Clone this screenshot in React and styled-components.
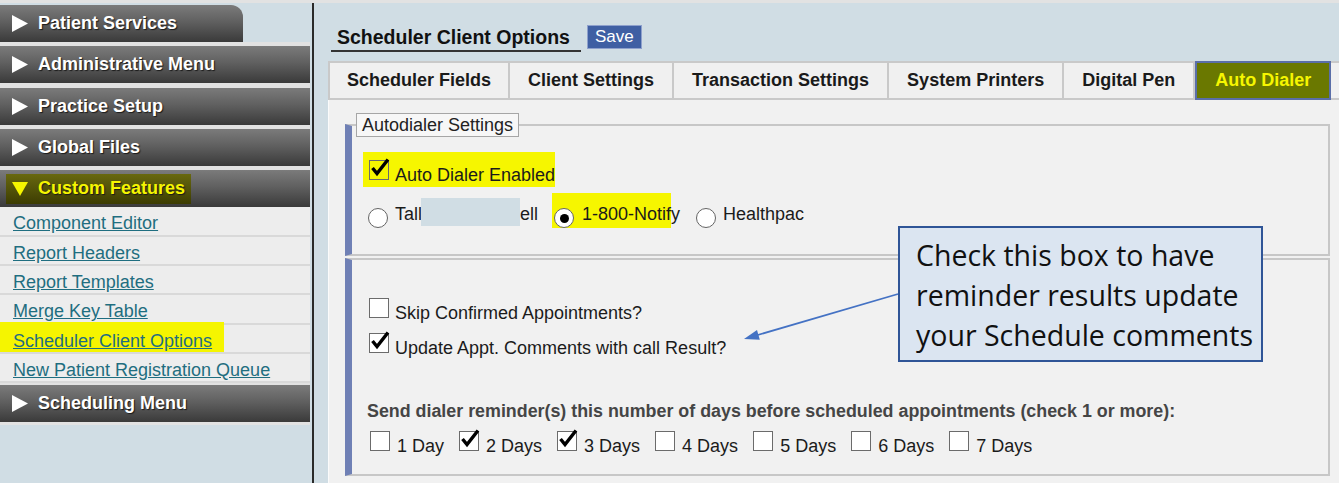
import React from "react";
import styled, { createGlobalStyle, css } from "styled-components";

const GlobalStyle = createGlobalStyle`
  html, body { margin: 0; padding: 0; }
  body {
    background: #d0dde4;
    font-family: "Liberation Sans", Arial, sans-serif;
    overflow: hidden;
  }
`;

// data
const menus = ["Administrative Menu", "Practice Setup", "Global Files"];
const links = [
  "Component Editor",
  "Report Headers",
  "Report Templates",
  "Merge Key Table",
  "Scheduler Client Options",
  "New Patient Registration Queue",
];
const tabs = [
  "Scheduler Fields",
  "Client Settings",
  "Transaction Settings",
  "System Printers",
  "Digital Pen",
  "Auto Dialer",
];
const days = [
  ["1 Day", false],
  ["2 Days", true],
  ["3 Days", true],
  ["4 Days", false],
  ["5 Days", false],
  ["6 Days", false],
  ["7 Days", false],
];

const RightTri = () => (
  <svg width="16" height="17" viewBox="0 0 16 17">
    <polygon points="0,0 16,8.5 0,17" fill="#fff" />
  </svg>
);
const DownTri = () => (
  <svg width="16" height="14" viewBox="0 0 16 14">
    <polygon points="0,0 16,0 8,14" fill="#f6f600" />
  </svg>
);

const Check = ({ on, bg }) => (
  <Box $bg={bg}>
    {on && (
      <CheckMark width="22" height="22" viewBox="0 0 22 22">
        <path d="M3.5 11 L8 16.5 L19 2.5" fill="none" stroke="#000" strokeWidth="3.4" />
      </CheckMark>
    )}
  </Box>
);

const App = () => {
  return (
    <>
      <GlobalStyle />
      <Frame>
        <TopStrip />
        <Body>
          <Sidebar>
            <PatientTab>
              <RightTri />
              Patient Services
            </PatientTab>
            <MenuGroup>
              {menus.map((m) => (
                <Bar key={m}>
                  <RightTri />
                  {m}
                </Bar>
              ))}
              <Bar>
                <Hot>
                  <DownTri />
                  Custom Features
                </Hot>
              </Bar>
              <LinkList>
                {links.map((l) => (
                  <LinkRow key={l}>
                    {l === "Scheduler Client Options" ? (
                      <Mark>
                        <Link href="#">{l}</Link>
                      </Mark>
                    ) : (
                      <Link href="#">{l}</Link>
                    )}
                  </LinkRow>
                ))}
              </LinkList>
              <Bar $gap={2}>
                <RightTri />
                Scheduling Menu
              </Bar>
            </MenuGroup>
          </Sidebar>

          <Main>
            <TitleRow>
              <Title>Scheduler Client Options</Title>
              <SaveButton>Save</SaveButton>
            </TitleRow>
            <TabRow>
              {tabs.map((t) => (
                <Tab key={t} $active={t === "Auto Dialer"}>
                  {t}
                </Tab>
              ))}
              <Tab $stub />
            </TabRow>

            <Panel>
              <Fieldset $pad="15px 0 26px">
                <Legend>Autodialer Settings</Legend>
                <Marked>
                  <Check on bg="#f6f600" />
                  <Label>Auto Dialer Enabled</Label>
                </Marked>
                <RadioRow>
                  <Radio />
                  <Label $mb={4} $ml={7}>Tall</Label>
                  <Redacted />
                  <Label $mb={4}>ell</Label>
                  <RadioMark>
                    <Radio $on />
                    <Label $mb={4} $ml={8}>1-800-Notify</Label>
                  </RadioMark>
                  <Radio $ml={25} />
                  <Label $mb={4} $ml={7}>Healthpac</Label>
                </RadioRow>
              </Fieldset>

              <Fieldset $pad="38px 0 18px" $mt={2}>
                <CheckRow>
                  <Check />
                  <Label>Skip Confirmed Appointments?</Label>
                </CheckRow>
                <CheckRow $mt={10}>
                  <Check on />
                  <Label>Update Appt. Comments with call Result?</Label>
                </CheckRow>
                <SendLabel>
                  Send dialer reminder(s) this number of days before scheduled appointments (check 1 or more):
                </SendLabel>
                <DayRow>
                  {days.map(([d, on]) => (
                    <DayItem key={d}>
                      <Check on={on} />
                      <Label>{d}</Label>
                    </DayItem>
                  ))}
                </DayRow>
              </Fieldset>
            </Panel>
          </Main>
        </Body>

        <Pointer width="1339" height="483" viewBox="0 0 1339 483">
          <line x1="898" y1="294" x2="756" y2="335.5" stroke="#4472c4" strokeWidth="1.8" />
          <polygon points="744,339 759.8,339.8 757,330" fill="#4472c4" />
        </Pointer>
        <Callout>
          Check this box to have
          <br />
          reminder results update
          <br />
          your Schedule comments
        </Callout>
      </Frame>
    </>
  );
};

const Frame = styled.div`
  position: relative;
  width: 1339px;
  height: 483px;
  overflow: hidden;
  background: #d0dde4;
`;
const TopStrip = styled.div`
  height: 3px;
  background: #e2e2e2;
`;
const Body = styled.div`
  display: flex;
  height: 480px;
`;

// sidebar
const Sidebar = styled.nav`
  width: 314px;
  flex-shrink: 0;
  box-sizing: border-box;
  border-right: 2px solid #2a2a2a;
  padding-top: 2px;
`;
const barStyle = css`
  display: flex;
  align-items: center;
  gap: 10px;
  box-sizing: border-box;
  height: 37px;
  padding-left: 12px;
  background: linear-gradient(to bottom, #7b7b7b 0%, #606060 45%, #3a3a3a 100%);
  color: #fff;
  font-weight: bold;
  font-size: 18px;
  text-shadow: 1px 1px 1px #1a1a1a;
  white-space: nowrap;
`;
const PatientTab = styled.div`
  ${barStyle};
  width: 243px;
  border-top-right-radius: 12px;
`;
const MenuGroup = styled.div`
  width: 310px;
  background: #e2e2e2;
  padding-bottom: 3px;
  display: flex;
  flex-direction: column;
`;
const Bar = styled.div`
  ${barStyle};
  margin-top: ${(p) => (p.$gap ?? 4.3)}px;
`;
const Hot = styled.span`
  display: inline-flex;
  align-items: center;
  gap: 10px;
  height: 30px;
  margin-left: -6px;
  padding: 0 6px;
  background: linear-gradient(to bottom, #68680e 0%, #4e4e08 60%, #3c3c02 100%);
  color: #f6f600;
`;
const LinkList = styled.div`
  background: #ededed;
`;
const LinkRow = styled.div`
  box-sizing: border-box;
  height: 29.33px;
  padding: 6px 0 0 13px;
  border-bottom: 2px solid #d9d9d9;
  font-size: 18px;
  line-height: 20px;
  white-space: nowrap;
`;
const Link = styled.a`
  color: #1f6e80;
  text-decoration: underline;
`;
const Mark = styled.span`
  background: #f5f500;
  padding: 9px 12px 1px 13px;
  margin-left: -13px;
`;

// main
const Main = styled.main`
  flex: 1;
  min-width: 0;
  padding-left: 14px;
  display: flex;
  flex-direction: column;
`;
const TitleRow = styled.div`
  display: flex;
  align-items: flex-start;
  gap: 6px;
  margin: 22px 0 0 3px;
`;
const Title = styled.h1`
  margin: 0;
  width: 250px;
  box-sizing: border-box;
  padding: 1px 6px 2px;
  border-bottom: 2px solid #333;
  font-size: 19.5px;
  line-height: 22px;
  font-weight: bold;
  color: #111;
  white-space: nowrap;
`;
const SaveButton = styled.button`
  height: 24px;
  padding: 0 7px;
  border: 1px solid #8ea0cc;
  background: #3f5fa3;
  color: #fff;
  font-family: "Liberation Sans", Arial, sans-serif;
  font-size: 17px;
  cursor: pointer;
`;
const TabRow = styled.div`
  display: flex;
  margin-top: 9px;
`;
const Tab = styled.div`
  flex-shrink: 0;
  display: flex;
  align-items: center;
  box-sizing: border-box;
  height: 39px;
  padding: 0 18px;
  background: #f0f0f0;
  border: 2px solid #c9c9c9;
  border-left-width: 0;
  font-weight: bold;
  font-size: 18px;
  color: #1a1a1a;
  white-space: nowrap;
  &:first-child {
    border-left-width: 2px;
    padding: 0 17px;
  }
  ${(p) =>
    p.$active &&
    css`
      border: 2px solid #5a6ea8;
      background: #6a7800;
      color: #f6f600;
    `}
  ${(p) => p.$stub && css`min-width: 40px;`}
`;
const Panel = styled.section`
  flex: 1;
  box-sizing: border-box;
  background: #f1f1f1;
  border-left: 1px solid #fbfbfb;
  padding-top: 13px;
`;
const Fieldset = styled.fieldset`
  margin: ${(p) => p.$mt || 0}px 9px 0 16px;
  padding: ${(p) => p.$pad};
  border: 2px solid #c7c7c7;
  border-left: 7px solid #6f80b5;
  min-width: 0;
`;
const Legend = styled.legend`
  margin-left: 4px;
  padding: 0 5px;
  border: 1px solid #a6a6a6;
  background: #f7f7f7;
  font-size: 18px;
  line-height: 22px;
  color: #222;
`;
const Box = styled.span`
  position: relative;
  flex-shrink: 0;
  box-sizing: border-box;
  width: 20px;
  height: 20px;
  margin-bottom: 5px;
  border: 1.5px solid #6b6b6b;
  background: ${(p) => p.$bg || "#fff"};
`;
const CheckMark = styled.svg`
  position: absolute;
  left: -1px;
  top: -4px;
`;
const Label = styled.span`
  font-size: 18px;
  line-height: 20px;
  color: #1b1b1b;
  white-space: nowrap;
  margin-bottom: ${(p) => p.$mb || 0}px;
  margin-left: ${(p) => p.$ml || 0}px;
`;
const Marked = styled.div`
  display: flex;
  align-items: flex-end;
  gap: 6px;
  width: fit-content;
  height: 35px;
  box-sizing: border-box;
  margin-left: 11px;
  padding: 0 0 2px 6px;
  background: #f6f600;
`;
const RadioRow = styled.div`
  display: flex;
  align-items: flex-end;
  height: 35px;
  margin: 6px 0 0 16px;
`;
const Radio = styled.span`
  flex-shrink: 0;
  box-sizing: border-box;
  width: 20px;
  height: 20px;
  margin-left: ${(p) => p.$ml || 0}px;
  border: 1.5px solid #646464;
  border-radius: 50%;
  background: #fff;
  display: grid;
  place-items: center;
  &::after {
    content: "";
    width: 9px;
    height: 9px;
    border-radius: 50%;
    background: ${(p) => (p.$on ? "#000" : "transparent")};
  }
`;
const Redacted = styled.span`
  flex-shrink: 0;
  width: 99px;
  height: 28px;
  margin: 0 0 2px -1px;
  background: #d0dde4;
`;
const RadioMark = styled.div`
  display: flex;
  align-items: flex-end;
  width: 119px;
  height: 35px;
  box-sizing: border-box;
  margin-left: 14px;
  padding-left: 2px;
  background: #f6f600;
`;
const CheckRow = styled.div`
  display: flex;
  align-items: flex-end;
  gap: 6px;
  margin: ${(p) => p.$mt || 0}px 0 0 17px;
`;
const SendLabel = styled.div`
  margin: 42px 0 0 15px;
  font-weight: bold;
  font-size: 17.85px;
  line-height: 22px;
  color: #454545;
  white-space: nowrap;
`;
const DayRow = styled.div`
  display: flex;
  gap: 15px;
  margin: 9px 0 0 18px;
`;
const DayItem = styled.div`
  display: flex;
  align-items: flex-end;
  gap: 7px;
`;

// overlays
const Pointer = styled.svg`
  position: absolute;
  left: 0;
  top: 0;
  pointer-events: none;
`;
const Callout = styled.div`
  position: absolute;
  left: 898px;
  top: 226px;
  width: 365px;
  height: 136px;
  box-sizing: border-box;
  padding: 7px 0 0 16px;
  border: 2px solid #2f5597;
  background: #dbe5f1;
  font-family: "Open Sans", "Noto Sans", sans-serif;
  font-size: 28.5px;
  line-height: 40px;
  color: #111;
  white-space: nowrap;
`;

export default App;
